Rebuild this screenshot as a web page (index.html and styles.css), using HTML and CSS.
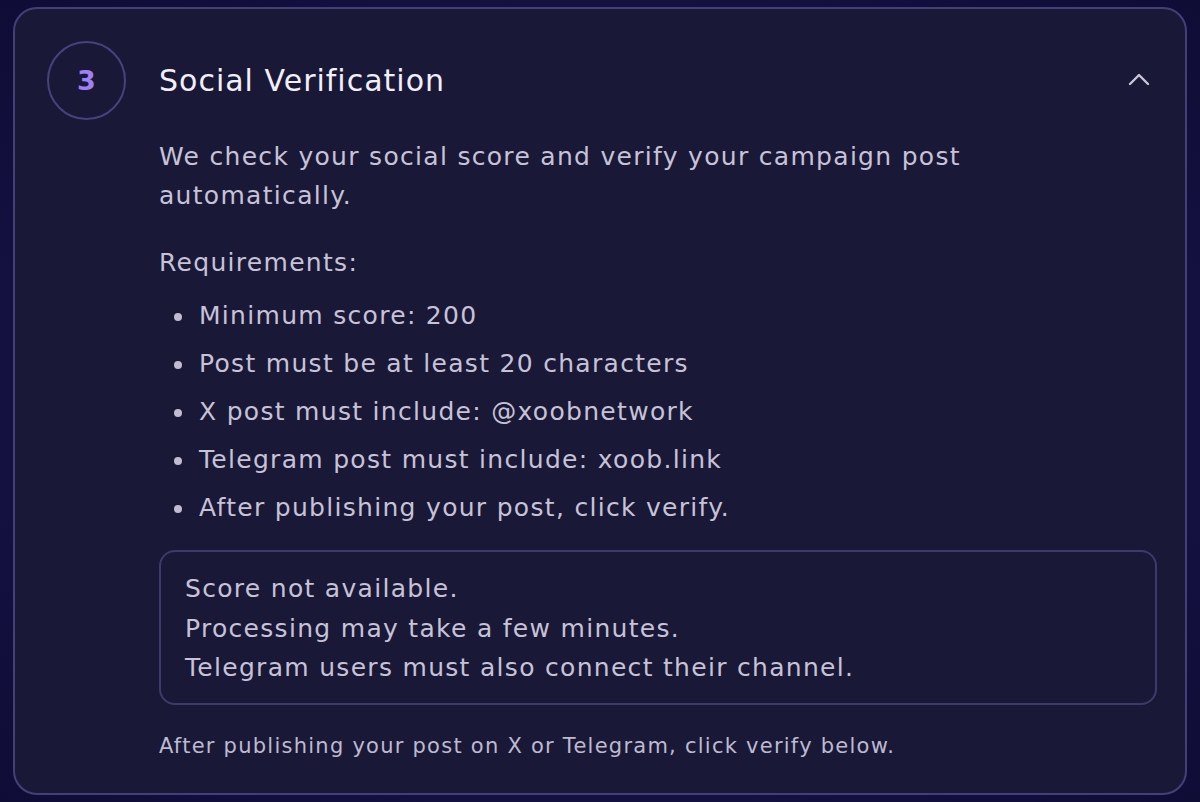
FILE: index.html
```html
<!DOCTYPE html>
<html lang="en">
<head>
<meta charset="utf-8">
<title>Social Verification</title>
<link rel="stylesheet" href="styles.css">
</head>
<body>
<section class="card">
  <header class="card-head">
    <div class="step">3</div>
    <h2 class="title">Social Verification</h2>
    <svg class="chevron" width="22" height="14" viewBox="0 0 22 14" aria-hidden="true">
      <polyline points="2,12 11,3 20,12" fill="none" stroke="#c9c6da" stroke-width="2.4" stroke-linecap="round" stroke-linejoin="round"/>
    </svg>
  </header>
  <div class="card-body">
    <p class="desc">We check your social score and verify your campaign post automatically.</p>
    <p class="req">Requirements:</p>
    <ul class="req-list">
      <li>Minimum score: 200</li>
      <li>Post must be at least 20 characters</li>
      <li>X post must include: @xoobnetwork</li>
      <li>Telegram post must include: xoob.link</li>
      <li>After publishing your post, click verify.</li>
    </ul>
    <div class="status">
      <div>Score not available.</div>
      <div>Processing may take a few minutes.</div>
      <div>Telegram users must also connect their channel.</div>
    </div>
    <p class="foot">After publishing your post on X or Telegram, click verify below.</p>
  </div>
</section>
</body>
</html>
```
FILE: styles.css
```css
html, body {
  margin: 0;
  padding: 0;
}
body {
  width: 1200px;
  height: 802px;
  overflow: hidden;
  background: radial-gradient(ellipse at center, #1a1744 0%, #141040 70%, #0f0c36 100%);
  font-family: "DejaVu Sans", "Open Sans", sans-serif;
  color: #c6c3d8;
  padding: 7px 13px;
  box-sizing: border-box;
}
.card {
  box-sizing: border-box;
  height: 788px;
  background: #1a1837;
  border: 2px solid #444077;
  border-radius: 24px;
  padding: 32px 35px 0 32px;
}
.card-head {
  display: flex;
  align-items: center;
  gap: 33px;
}
.step {
  box-sizing: border-box;
  width: 79px;
  height: 79px;
  border-radius: 50%;
  border: 2px solid #47427c;
  display: flex;
  align-items: center;
  justify-content: center;
  color: #9e80f2;
  font-size: 27px;
  font-weight: 700;
  flex: none;
}
.title {
  margin: 0;
  flex: 1;
  font-size: 30px;
  font-weight: 400;
  color: #f1eff9;
  letter-spacing: 1px;
}
.chevron {
  flex: none;
  margin-top: -4px;
}
.card-body {
  margin-left: 112px;
  width: 998px;
  letter-spacing: 1.3px;
}
.desc {
  margin: 17px 0 0;
  font-size: 25px;
  line-height: 39px;
  padding-right: 120px;
}
.req {
  margin: 28px 0 0;
  font-size: 25px;
  line-height: 39px;
}
.req-list {
  list-style: none;
  margin: 10px 0 0;
  padding: 0;
}
.req-list li {
  position: relative;
  padding-left: 40px;
  font-size: 25px;
  line-height: 48px;
}
.req-list li::before {
  content: "";
  position: absolute;
  left: 15px;
  top: 21px;
  width: 8px;
  height: 8px;
  border-radius: 50%;
  background: #c0bdd2;
}
.status {
  margin-top: 18px;
  border: 2px solid #3e3a6b;
  border-radius: 16px;
  padding: 17px 24px 15px 24px;
  font-size: 25px;
  line-height: 39.5px;
}
.foot {
  margin: 25px 0 0;
  font-size: 21px;
  line-height: 32px;
  color: #bdbad0;
  letter-spacing: 1.25px;
}
```
